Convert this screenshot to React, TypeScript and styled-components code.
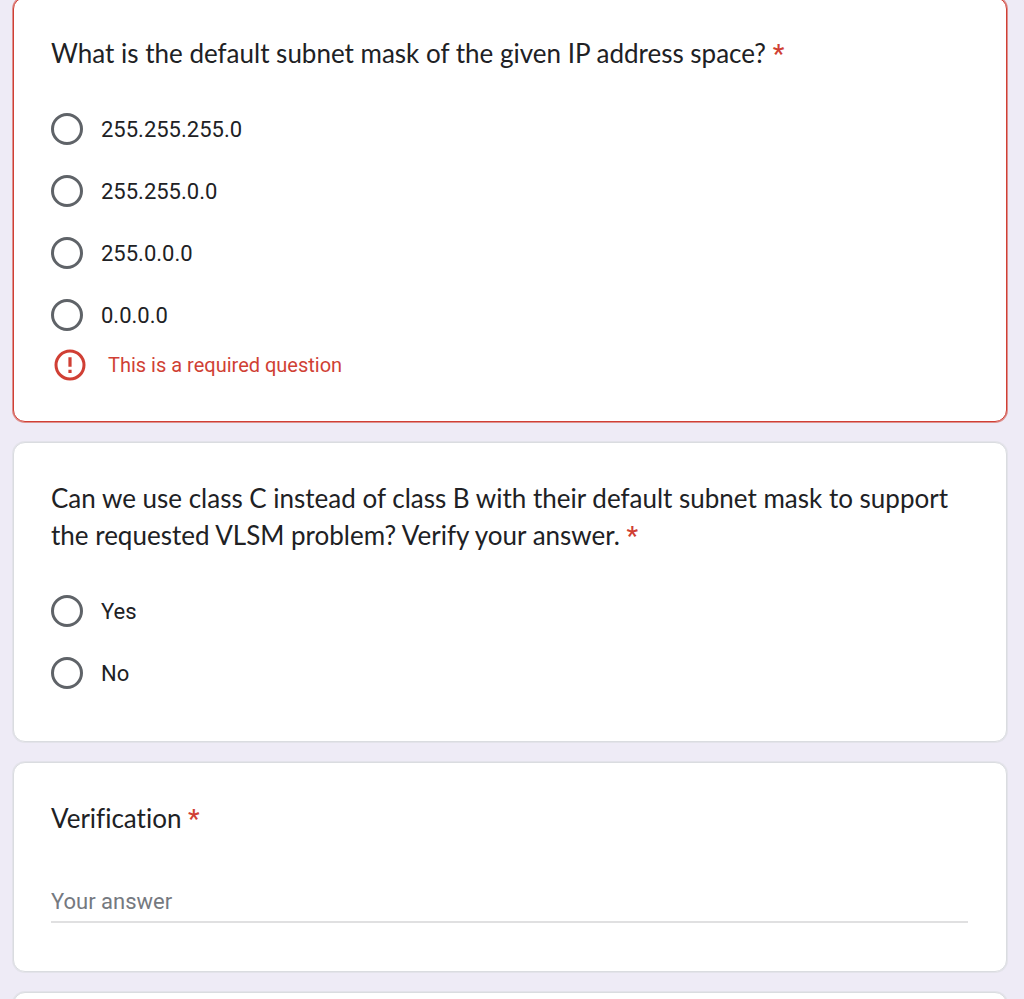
import React from "react";
import styled, { createGlobalStyle, css } from "styled-components";

const GlobalStyle = createGlobalStyle`
  *, *::before, *::after { box-sizing: border-box; }
  body { margin: 0; background: #eeebf6; }
`;

const Page = styled.main`
  height: 100vh;
  overflow: hidden;
  background: #eeebf6;
  color: #202124;
  font-family: Roboto, "Liberation Sans", sans-serif;
`;

const Questions = styled.form`
  display: flex;
  flex-direction: column;
  gap: 20px;
  margin: -3px 17px 0 13px;
`;

const Card = styled.section<{ $invalid?: boolean }>`
  flex: none;
  min-height: 80px;
  padding: 37px 38px 37px 37px;
  border: 1px solid ${(p) => (p.$invalid ? "#d03f34" : "#dadce0")};
  border-radius: 12px;
  background: #fff;
  box-shadow: 0 0 0 1px ${(p) => (p.$invalid ? "#d03f3488" : "#dadce088")};
`;

const Group = styled.fieldset`
  min-width: 0;
  margin: 0;
  padding: 0;
  border: 0;
`;

const titleStyle = css`
  display: block;
  padding: 0 0 26px;
  font-family: Lato, "Liberation Sans", sans-serif;
  font-size: 26px;
  font-variant-ligatures: none;
  line-height: 37px;
`;

const GroupTitle = styled.legend`
  ${titleStyle}
`;

const FieldTitle = styled.label`
  ${titleStyle}
`;

const Required = styled.span`
  color: #d03f34;
  font-family: Roboto, "Liberation Sans", sans-serif;
  font-weight: 500;
  line-height: 1;
`;

const Option = styled.label`
  display: flex;
  align-items: center;
  gap: 18px;
  height: 62px;
  font-size: 22px;
  line-height: 31px;
`;

const Radio = styled.input`
  appearance: none;
  flex: none;
  width: 32px;
  height: 32px;
  margin: 0;
  border: 3px solid #5f6368;
  border-radius: 50%;

  &:checked {
    border-color: #673ab7;
    background: radial-gradient(#673ab7 50%, transparent 54%);
  }
`;

const ErrorMessage = styled.div`
  display: flex;
  align-items: center;
  gap: 22px;
  height: 38px;
  padding-left: 3px;
  color: #d03f34;
  font-size: 20px;
  line-height: 26px;
`;

const Answer = styled.input`
  display: block;
  width: 100%;
  height: 60px;
  margin-bottom: 11px;
  padding: 18px 0 0;
  border: 0;
  border-bottom: 2px solid #e0e0e1;
  outline: 0;
  background: transparent;
  color: #202124;
  font: 22px Roboto, "Liberation Sans", sans-serif;

  &::placeholder {
    color: #757980;
    opacity: 1;
  }
`;

const AlertIcon = () => (
  <svg width="32" height="32" viewBox="0 0 32 32" aria-hidden="true">
    <circle cx="16" cy="16" r="14" fill="none" stroke="currentColor" strokeWidth="3" />
    <path d="M14.4 8.2h3.2v9.6h-3.2zM14.4 20.8h3.2v3.2h-3.2z" fill="currentColor" />
  </svg>
);

interface ChoiceProps {
  name: string;
  title: string;
  options: string[];
  error?: string;
}

const ChoiceQuestion = ({ name, title, options, error }: ChoiceProps) => (
  <Card $invalid={Boolean(error)}>
    <Group>
      <GroupTitle>
        {title} <Required>*</Required>
      </GroupTitle>
      {options.map((option) => (
        <Option key={option}>
          <Radio type="radio" name={name} value={option} />
          {option}
        </Option>
      ))}
    </Group>
    {error && (
      <ErrorMessage role="alert">
        <AlertIcon />
        {error}
      </ErrorMessage>
    )}
  </Card>
);

export default function App() {
  return (
    <>
      <GlobalStyle />
      <Page>
        <Questions>
          <ChoiceQuestion
            name="mask"
            title="What is the default subnet mask of the given IP address space?"
            options={["255.255.255.0", "255.255.0.0", "255.0.0.0", "0.0.0.0"]}
            error="This is a required question"
          />
          <ChoiceQuestion
            name="class"
            title="Can we use class C instead of class B with their default subnet mask to support the requested VLSM problem? Verify your answer."
            options={["Yes", "No"]}
          />
          <Card>
            <FieldTitle htmlFor="verification">
              Verification <Required>*</Required>
            </FieldTitle>
            <Answer id="verification" type="text" placeholder="Your answer" />
          </Card>
          <Card />
        </Questions>
      </Page>
    </>
  );
}
